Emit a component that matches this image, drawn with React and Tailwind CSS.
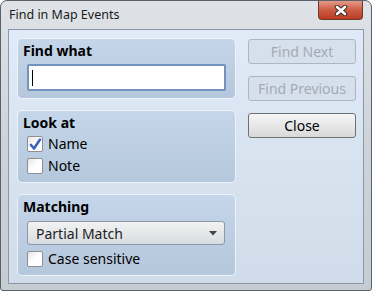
import React from 'react';

const font = { fontFamily: '"Noto Sans", "Open Sans", sans-serif' };

function CheckBox({ checked, label }) {
    return (
        <div className="flex h-[16px] items-center gap-[5px]">
            <div className="relative h-[16px] w-[16px] rounded-[2px] border border-[#8e8f8f] bg-gradient-to-br from-[#e6e6e6] via-white to-white">
                {checked && (
                    <svg className="absolute left-[1px] top-[1px]" width="13" height="13" viewBox="0 0 13 13">
                        <path d="M2 7 L5 10.5 L11 1.5" fill="none" stroke="#3a64b8" strokeWidth="2.6" strokeLinecap="round" strokeLinejoin="round" />
                    </svg>
                )}
            </div>
            <span className="text-[14px] leading-[16px] text-black">{label}</span>
        </div>
    );
}

function Panel({ title, className, children }) {
    return (
        <div className={`rounded-[5px] border border-[#edf2f9] bg-gradient-to-b from-[#c5d6ea] to-[#b5c7dc] pl-[5px] pt-[2px] ${className}`}>
            <div className="text-[14px] font-bold leading-[20px] text-black">{title}</div>
            <div className="pl-[4px]">{children}</div>
        </div>
    );
}

function Button({ children, disabled }) {
    return (
        <div
            className={`flex h-[25px] w-[108px] items-center justify-center rounded-[3px] border text-[14px] ${disabled
                ? 'border-[#adb6c0] bg-[#d6e0ec] text-[#a3abb4]'
                : 'border-[#707070] bg-gradient-to-b from-[#f6f6f6] to-[#d9d9d9] text-black'
                }`}
        >
            {children}
        </div>
    );
}

export default function App() {
    return (
        <div className="h-[292px] w-[372px] bg-white" style={font}>
            <div className="flex h-[291px] w-[372px] flex-col rounded-t-[7px] rounded-b-[3px] border border-[#5b6168] bg-gradient-to-b from-[#dfe3e7] via-[#cdd3d9] to-[#c5ccd2]">
                <div className="relative flex h-[28px] shrink-0 items-center pl-[8px]">
                    <span className="text-[12.5px] text-[#1a1a1a]">Find in Map Events</span>
                    <div className="absolute right-[8px] top-0 flex h-[19px] w-[45px] items-center justify-center rounded-b-[4px] border border-t-0 border-[#6b3a30] bg-gradient-to-b from-[#e39a88] via-[#cd5b43] to-[#b93a22]">
                        <svg width="14" height="11" viewBox="0 0 14 11">
                            <path d="M3 2 L11 9 M11 2 L3 9" stroke="#3b2620" strokeWidth="4.4" strokeLinecap="round" />
                            <path d="M3 2 L11 9 M11 2 L3 9" stroke="#ffffff" strokeWidth="2.6" strokeLinecap="round" />
                        </svg>
                    </div>
                </div>
                <div className="mx-[7px] mb-[6px] flex flex-1 gap-[12px] border border-[#8b99a7] bg-gradient-to-b from-[#e0eaf8] to-[#d0dce9] pl-[8px] pt-[8px]">
                    <div className="flex w-[219px] flex-col gap-[11px]">
                        <Panel title="Find what" className="h-[61px]">
                            <div className="mt-[3px] flex h-[27px] w-[199px] items-center rounded-[2px] border-2 border-[#7193bd] bg-white pl-[3px]">
                                <div className="h-[16px] w-[1px] bg-black" />
                            </div>
                        </Panel>
                        <Panel title="Look at" className="h-[73px]">
                            <div className="mt-[3px] flex flex-col gap-[6px]">
                                <CheckBox checked label="Name" />
                                <CheckBox label="Note" />
                            </div>
                        </Panel>
                        <Panel title="Matching" className="h-[82px]">
                            <div className="mt-[4px] flex h-[24px] w-[198px] items-center justify-between rounded-[3px] border border-[#8d98a3] bg-gradient-to-b from-[#f2f2f2] to-[#d8dce1] pl-[8px] pr-[7px]">
                                <span className="text-[14px] text-[#222]">Partial Match</span>
                                <svg width="8" height="5" viewBox="0 0 8 5">
                                    <path d="M0 0 H8 L4 4.5 Z" fill="#444" />
                                </svg>
                            </div>
                            <div className="mt-[6px]">
                                <CheckBox label="Case sensitive" />
                            </div>
                        </Panel>
                    </div>
                    <div className="flex flex-col gap-[12px] pt-[1px]">
                        <Button disabled>Find Next</Button>
                        <Button disabled>Find Previous</Button>
                        <Button>Close</Button>
                    </div>
                </div>
            </div>
        </div>
    );
}
